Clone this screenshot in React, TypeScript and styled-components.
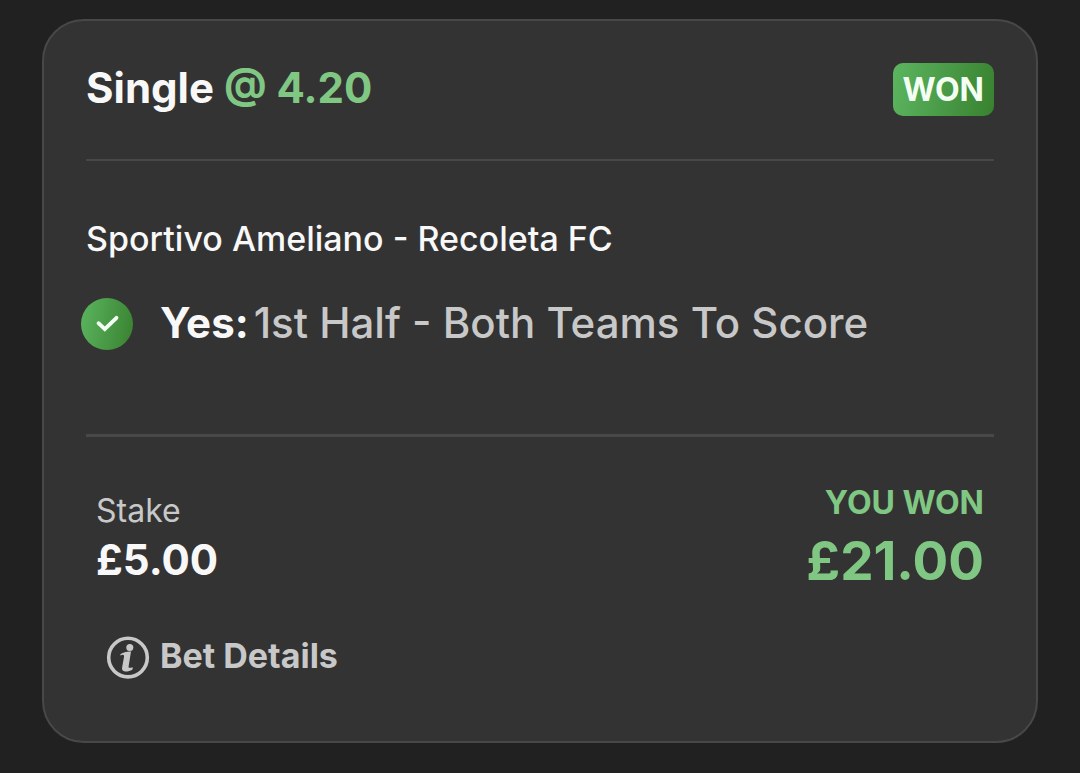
import React from "react";
import styled, { createGlobalStyle } from "styled-components";

const GlobalStyle = createGlobalStyle`
  *, *::before, *::after { box-sizing: border-box; }
  body {
    margin: 0;
    background: #212121;
    color: #f8f8f8;
    font-family: Inter, "Liberation Sans", sans-serif;
  }
  h1, h2, p, dl, dt, dd { margin: 0; }
`;

const Page = styled.main`
  padding: 19px 42px 30px;
`;

const Card = styled.article`
  padding: 42px;
  border: 2px solid #484848;
  border-radius: 42px;
  background: #333333;
`;

const CardHeader = styled.header`
  display: flex;
  align-items: flex-start;
  justify-content: space-between;
  padding-bottom: 43px;
  border-bottom: 2px solid #484848;
`;

const Title = styled.h1`
  font-size: 42px;
  line-height: 50px;
  font-weight: 700;
`;

const Odds = styled.span`
  color: #81c784;
`;

const StatusBadge = styled.span`
  padding: 0 10px;
  border-radius: 10px;
  background: linear-gradient(100deg, #5cb560, #38812f);
  color: #f4fff4;
  font-size: 32px;
  line-height: 53px;
  font-weight: 700;
`;

const Selection = styled.section`
  padding: 56px 0 84px;
  border-bottom: 3px solid #484848;
`;

const EventName = styled.h2`
  font-size: 34px;
  line-height: 44px;
  font-weight: 500;
`;

const Pick = styled.div`
  display: flex;
  align-items: center;
  gap: 27px;
  margin: 37px 0 0 -5px;
`;

const ResultMark = styled.span`
  display: flex;
  flex: none;
  width: 52px;
  height: 52px;
  border-radius: 50%;
  background: linear-gradient(100deg, #5cb560, #38812f);
`;

const Market = styled.p`
  display: flex;
  gap: 5px;
  padding-bottom: 2px;
  color: #c8c8c8;
  font-size: 42px;
  line-height: 50px;
  font-weight: 500;
`;

const Outcome = styled.strong`
  color: #f8f8f8;
  font-weight: 700;
`;

const Totals = styled.dl`
  display: flex;
  justify-content: space-between;
  padding: 44px 10px 0;
`;

const Amount = styled.div<{ $won?: boolean }>`
  padding-top: ${(p) => (p.$won ? 0 : 8)}px;
  color: ${(p) => (p.$won ? "#81c784" : "#f8f8f8")};
  text-align: ${(p) => (p.$won ? "right" : "left")};
`;

const AmountLabel = styled.dt<{ $won?: boolean }>`
  color: ${(p) => (p.$won ? "inherit" : "#c8c8c8")};
  font-size: 32px;
  line-height: 44px;
  font-weight: ${(p) => (p.$won ? 700 : 400)};
`;

const AmountValue = styled.dd<{ $won?: boolean }>`
  font-size: ${(p) => (p.$won ? 53 : 42)}px;
  line-height: ${(p) => (p.$won ? 72 : 54)}px;
  font-weight: 700;
`;

const DetailsButton = styled.button`
  display: flex;
  align-items: flex-end;
  gap: 10px;
  margin: 36px 0 20px 20px;
  padding: 0;
  border: 0;
  background: none;
  color: #c8c8c8;
  font-family: inherit;
  font-size: 34px;
  line-height: 46px;
  font-weight: 700;
  cursor: pointer;
`;

export default function App() {
  return (
    <>
      <GlobalStyle />
      <Page>
        <Card>
          <CardHeader>
            <Title>
              Single <Odds>@ 4.20</Odds>
            </Title>
            <StatusBadge>WON</StatusBadge>
          </CardHeader>
          <Selection>
            <EventName>Sportivo Ameliano - Recoleta FC</EventName>
            <Pick>
              <ResultMark>
                <svg width="52" height="52" viewBox="0 0 52 52" fill="none" aria-hidden="true">
                  <path
                    d="M17.5 25.2l6.3 6L35.5 19.8"
                    stroke="#f4fff4"
                    strokeWidth="3.8"
                    strokeLinecap="round"
                  />
                </svg>
              </ResultMark>
              <Market>
                <Outcome>Yes:</Outcome>
                <span>1st Half - Both Teams To Score</span>
              </Market>
            </Pick>
          </Selection>
          <Totals>
            <Amount>
              <AmountLabel>Stake</AmountLabel>
              <AmountValue>£5.00</AmountValue>
            </Amount>
            <Amount $won>
              <AmountLabel $won>YOU WON</AmountLabel>
              <AmountValue $won>£21.00</AmountValue>
            </Amount>
          </Totals>
          <DetailsButton type="button">
            <svg width="44" height="44" viewBox="0 0 44 44" fill="none" aria-hidden="true">
              <circle cx="22" cy="22.6" r="19.3" stroke="currentColor" strokeWidth="3.6" />
              <circle cx="23.8" cy="12.4" r="3.5" fill="currentColor" />
              <path
                d="M14.4 19.2c3.2-2 6.4-2.8 10.6-2.6l-2.4 14.8c-.2 1.6.7 1.9 4.2.8l-.3 2.2c-2.6 1.5-5.2 2.2-7.4 2-2.5-.1-3.4-1.5-3-3.8l1.9-10.7c.3-2-.7-2.8-3.6-1.4z"
                fill="currentColor"
              />
            </svg>
            Bet Details
          </DetailsButton>
        </Card>
      </Page>
    </>
  );
}
